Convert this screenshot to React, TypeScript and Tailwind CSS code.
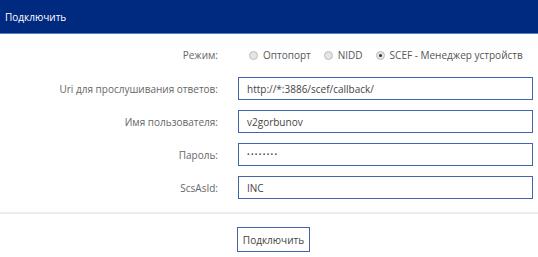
import { useState } from "react";

function Radio({ checked, label }: { checked?: boolean; label: string }) {
  return (
    <label className="flex items-center gap-[5px] whitespace-nowrap">
      <span className="flex h-[9px] w-[9px] items-center justify-center rounded-full border border-[#bdbdbd] bg-[#e4e4e4]">
        {checked ? <span className="h-[3px] w-[3px] rounded-full bg-[#333]" /> : null}
      </span>
      <span>{label}</span>
    </label>
  );
}

function Row({ label, children }: { label: string; children: React.ReactNode }) {
  return (
    <div className="flex items-center">
      <div className="w-[218px] shrink-0 text-right text-[#666]">{label}</div>
      <div className="ml-[20px] flex-1">{children}</div>
    </div>
  );
}

function Field({ value, secret }: { value: string; secret?: boolean }) {
  return (
    <div className="flex h-[23px] items-center border border-[#4264ad] bg-white px-[8px] text-[#444]">
      {secret ? (
        <span className="text-[7px] tracking-[1.3px]">{"•".repeat(value.length)}</span>
      ) : (
        value
      )}
    </div>
  );
}

export default function App() {
  const [mode] = useState("scef");

  return (
    <div
      className="h-[257px] w-[538px] bg-white text-[10px] leading-[16px]"
      style={{ fontFamily: '"Open Sans", "Noto Sans", sans-serif' }}
    >
      <div className="flex h-[34px] items-center border-b border-[#5b7cc0] bg-[#002a7f] pl-[5px] text-white">
        Подключить
      </div>

      <div className="flex flex-col gap-[10px] pr-[5px] pt-[13px]">
        <div className="mb-[4px] flex items-center">
          <div className="w-[218px] shrink-0 text-right text-[#666]">Режим:</div>
          <div className="ml-[31px] flex gap-[13px] text-[#555]">
            <Radio label="Оптопорт" checked={mode === "opto"} />
            <Radio label="NIDD" checked={mode === "nidd"} />
            <Radio label="SCEF - Менеджер устройств" checked={mode === "scef"} />
          </div>
        </div>

        <Row label="Uri для прослушивания ответов:">
          <Field value="http://*:3886/scef/callback/" />
        </Row>
        <Row label="Имя пользователя:">
          <Field value="v2gorbunov" />
        </Row>
        <Row label="Пароль:">
          <Field value="password" secret />
        </Row>
        <Row label="ScsAsId:">
          <Field value="INC" />
        </Row>
      </div>

      <div className="mt-[13px] border-t-2 border-[#ececec] pt-[13px]">
        <div className="pl-[237px]">
          <button className="h-[25px] w-[73px] border border-[#4264ad] bg-white text-[#444]">
            Подключить
          </button>
        </div>
      </div>
    </div>
  );
}
